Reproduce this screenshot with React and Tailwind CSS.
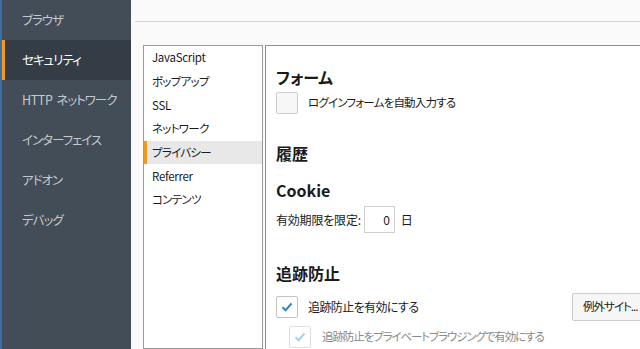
import React from "react";

const font = "[font-family:'Noto_Sans_CJK_JP','Noto_Sans',sans-serif] [font-feature-settings:'palt']";

function Check({ checked, disabled, unchecked }) {
  return (
    <div
      className={
        "w-[22px] h-[22px] rounded-[2px] border flex items-center justify-center shrink-0 " +
        (unchecked ? "bg-[#f7f7f7] border-[#cdcdcd]" : disabled ? "bg-white border-[#dedede]" : "bg-white border-[#c3c3c3]")
      }
    >
      {checked && (
        <svg width="12" height="10" viewBox="0 0 12 10">
          <path
            d="M1.5 5.2 L4.6 8.2 L10.5 1.5"
            fill="none"
            stroke={disabled ? "#a8d0ec" : "#2f86c6"}
            strokeWidth="2"
          />
        </svg>
      )}
    </div>
  );
}

export default function App() {
  const side = ["ブラウザ", "セキュリティ", "HTTP ネットワーク", "インターフェイス", "アドオン", "デバッグ"];
  const list = [
    ["JavaScript", true],
    ["ポップアップ", false],
    ["SSL", true],
    ["ネットワーク", false],
    ["プライバシー", false],
    ["Referrer", true],
    ["コンテンツ", false],
  ];
  return (
    <div className={"w-[640px] h-[349px] flex overflow-hidden " + font}>
      <div className="w-[131px] shrink-0 bg-[#434d57] border-l-2 border-[#3a6ea6] flex flex-col">
        {side.map((s, i) => {
          const parts = s.split(" ");
          return (
            <div
              key={s}
              className={
                "h-10 flex items-center text-[12.5px] tracking-[-1px] relative " +
                (i === 1 ? "bg-[#343d46] text-white" : "text-[#c5c9ce]")
              }
            >
              {i === 1 && <div className="absolute left-0 top-0 bottom-0 w-[3px] bg-[#f39a1e]" />}
              <span className="pl-[20px] flex gap-[4px]">
                {parts.map((p) => (
                  <span key={p} className={p === "HTTP" ? "tracking-[-0.4px]" : ""}>{p}</span>
                ))}
              </span>
            </div>
          );
        })}
      </div>
      <div className="flex-1 bg-[#fafafa] flex flex-col min-w-0">
        <div className="h-[22px] ml-[4px] border-b border-[#d2d2d2] shrink-0" />
        <div className="flex pl-[12px] pt-[23px] flex-1 min-h-0">
          <div className="w-[120px] shrink-0 border border-[#9a9a9a] bg-white flex flex-col">
            {list.map(([s, latin], i) => (
              <div
                key={s}
                className={
                  "h-[23.7px] flex items-center text-[11.5px] text-[#1a1a1a] relative " +
                  (latin ? "tracking-[-0.3px] " : "tracking-[-0.7px] ") +
                  (i === 4 ? "bg-[#e8e8e8]" : "")
                }
              >
                {i === 4 && <div className="absolute left-0 top-0 bottom-0 w-[3px] bg-[#f39a1e]" />}
                <span className="pl-[8px]">{s}</span>
              </div>
            ))}
          </div>
          <div className="w-[400px] shrink-0 ml-[2px] border-l border-t border-[#8f8f8f] bg-white pl-[10px] pr-[13px] flex flex-col text-[#1a1a1a]">
            <div className="mt-[20px] h-[22px] flex items-center text-[16px] font-semibold">フォーム</div>
            <div className="mt-[4px] flex items-center gap-[10px] text-[11.5px] tracking-[-0.8px]">
              <Check unchecked />
              <span>ログインフォームを自動入力する</span>
            </div>
            <div className="mt-[28px] h-[22px] flex items-center text-[16px] font-semibold">履歴</div>
            <div className="mt-[15px] h-[22px] flex items-center text-[16px] font-semibold">Cookie</div>
            <div className="mt-[5px] flex items-center text-[12px]">
              <span className="tracking-[-0.2px]">有効期限を限定:</span>
              <div className="ml-[3px] w-[31px] h-[27px] border border-[#cfcfcf] bg-white flex items-center justify-end pr-[4px]">0</div>
              <span className="ml-[6px]">日</span>
            </div>
            <div className="mt-[29px] h-[22px] flex items-center text-[16px] font-semibold">追跡防止</div>
            <div className="mt-[9px] h-[28px] flex items-center text-[12px]">
              <Check checked />
              <span className="ml-[10px] tracking-[-0.6px]">追跡防止を有効にする</span>
              <div className="ml-auto w-[80px] h-[28px] border border-[#cccccc] bg-[#f6f6f6] rounded-[2px] flex items-center pl-[10px] whitespace-nowrap tracking-[-1px] text-[11.5px]">
                例外サイト...
              </div>
            </div>
            <div className="mt-[5px] ml-[13px] flex items-center text-[11.5px] tracking-[-1.1px] text-[#8a8a8a]">
              <Check checked disabled />
              <span className="ml-[11px]">追跡防止をプライベートブラウジングで有効にする</span>
            </div>
          </div>
        </div>
      </div>
    </div>
  );
}
